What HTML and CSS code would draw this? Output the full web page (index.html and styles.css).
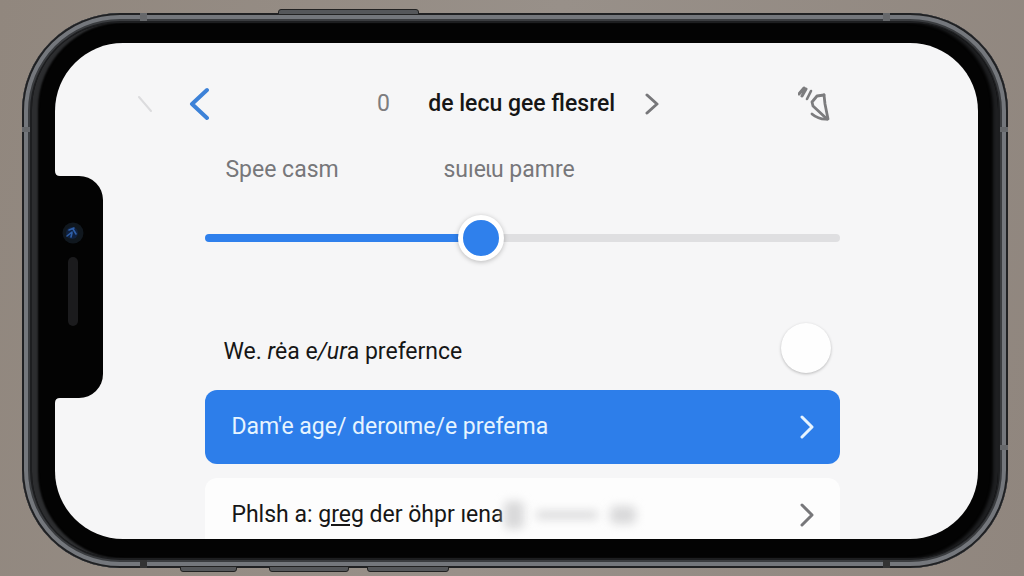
FILE: index.html
```
<!DOCTYPE html>
<html lang="en">
<head>
    <meta charset="UTF-8">
    <meta name="viewport" content="width=device-width, initial-scale=1.0">
    <title>Preferences</title>
    <link rel="stylesheet" href="styles.css">
</head>
<body>
    <div class="phone">
        <span class="key key-power"></span>
        <span class="key key-mute"></span>
        <span class="key key-up"></span>
        <span class="key key-down"></span>
        <span class="band band-tl"></span>
        <span class="band band-tr"></span>
        <span class="band band-bl"></span>
        <span class="band band-br"></span>
        <span class="band band-side band-lt"></span>
        <span class="band band-side band-rt"></span>
        <span class="band band-side band-rb"></span>

        <div class="bezel">
            <div class="notch">
                <svg class="camera" width="22" height="22" viewBox="0 0 22 22" aria-hidden="true">
                    <circle cx="11" cy="11" r="10.5" fill="#10171e"/>
                    <circle cx="10" cy="11" r="6" fill="#10213f"/>
                    <path d="M5 14l5-4M7 8l5-2M11 7l3 5M10 11l-1 4" fill="none" stroke="#2f5fa8" stroke-width="1.6"/>
                </svg>
                <span class="speaker"></span>
                <svg class="fillet fillet-top" width="5" height="5" viewBox="0 0 5 5" aria-hidden="true"><path d="M0 0Q0 5 5 5H0z"/></svg>
                <svg class="fillet fillet-bottom" width="5" height="5" viewBox="0 0 5 5" aria-hidden="true"><path d="M0 5Q0 0 5 0H0z"/></svg>
            </div>

            <main class="screen">
                <header class="topbar">
                    <svg class="tick" width="14" height="16" viewBox="0 0 14 16" aria-hidden="true"><path d="M1 1l12 14"/></svg>
                    <button class="icon-btn back" type="button" aria-label="Back">
                        <svg width="20" height="34" viewBox="0 0 20 34"><path d="M18 3L3 17l15 14"/></svg>
                    </button>
                    <span class="count">0</span>
                    <h1>de lecu gee flesrel</h1>
                    <button class="icon-btn next" type="button" aria-label="Next">
                        <svg width="14" height="22" viewBox="0 0 14 22"><path d="M2 2l10 9-10 9"/></svg>
                    </button>
                    <button class="icon-btn tool" type="button" aria-label="Options">
                        <svg width="34" height="38" viewBox="0 0 34 38">
                            <path d="M1 9l5-6M4 11l4-7" stroke-width="3"/>
                            <path d="M9 14l4-8" stroke-width="2.6"/>
                            <path d="M26 10l-7 1-5 6 1 4 14 13" stroke-width="2.8"/>
                            <path d="M26 10l1 9 3 15q-9 1-16-5" stroke-width="2.8"/>
                        </svg>
                    </button>
                </header>

                <div class="content">
                    <div class="slider-labels">
                        <label for="level">Spee casm</label>
                        <span>suıeɩu pamre</span>
                    </div>
                    <input class="slider" id="level" type="range" min="0" max="100" value="43">

                    <div class="pref">
                        <label for="pref">We. <i>r</i>ėa e<i>/ur</i>a prefernce</label>
                        <input class="toggle" id="pref" type="checkbox">
                    </div>

                    <button class="card card-active" type="button">
                        <span>Dam'e age/ deroɩme/e prefema</span>
                        <svg width="14" height="24" viewBox="0 0 14 24"><path d="M2 2l10 10L2 22"/></svg>
                    </button>
                    <button class="card" type="button">
                        <span>Phlsh a: <u>greg</u> der öhpr ıena</span>
                        <span class="smudge smudge-a"></span>
                        <span class="smudge smudge-b"></span>
                        <span class="smudge smudge-c"></span>
                        <svg width="14" height="24" viewBox="0 0 14 24"><path d="M2 2l10 10L2 22"/></svg>
                    </button>
                </div>
            </main>
        </div>
    </div>
</body>
</html>
```
FILE: styles.css
```
* {
    box-sizing: border-box;
}
body {
    margin: 0;
    height: 100vh;
    padding: 13px 16px 8px 22px;
    overflow: hidden;
    background: linear-gradient(100deg, #91877e, #989089 50%, #90867e);
    font-family: Roboto, "Liberation Sans", sans-serif;
    font-size: 23px;
    line-height: 28px;
    color: #161616;
}
svg {
    display: block;
    fill: none;
    stroke: currentColor;
    stroke-width: 3;
    stroke-linecap: round;
    stroke-linejoin: round;
}
button {
    font: inherit;
    color: inherit;
    border: 0;
    background: none;
    cursor: pointer;
}

/* phone body */
.phone {
    position: relative;
    height: 100%;
    padding: 2px;
    border-radius: 98px;
    background: #1d1e20;
    box-shadow: inset 0 0 0 2px #202123, inset 0 0 0 6px #74777c, inset 0 0 0 8px #3a3c3f;
}
.bezel {
    position: relative;
    height: 100%;
    padding: 20px 20px 19px 23px;
    border: 8px solid transparent;
    border-radius: 94px;
    background: #030303 padding-box;
    box-shadow: inset 7px 0 2px -1px #2c2d2f, inset -6px 0 3px -1px #1e1f21;
}
.key {
    position: absolute;
    height: 6px;
    background: #55575a;
    border: 1px solid #222;
}
.key-power {
    top: -4px;
    left: 26%;
    width: 141px;
    border-radius: 3px 3px 0 0;
}
.key-mute,
.key-up,
.key-down {
    bottom: -4px;
    border-radius: 0 0 3px 3px;
}
.key-mute {
    left: 16%;
    width: 57px;
}
.key-up {
    left: 25%;
    width: 80px;
}
.key-down {
    left: 35%;
    width: 82px;
}
.band {
    position: absolute;
    width: 7px;
    height: 8px;
    background: #66686b;
}
.band-tl { top: 0; left: 12%; }
.band-tr { top: 0; right: 12%; }
.band-bl { bottom: 0; left: 12%; background: #333; }
.band-br { bottom: 0; right: 12%; background: #333; }
.band-side {
    width: 8px;
    height: 5px;
}
.band-lt { left: 0; top: 114px; }
.band-rt { right: 0; top: 114px; }
.band-rb { right: 0; bottom: 118px; }

.notch {
    position: absolute;
    z-index: 1;
    top: 153px;
    left: 22px;
    width: 49px;
    height: 222px;
    border-radius: 0 24px 24px 0;
    background: #030303;
}
.camera {
    position: absolute;
    top: 46px;
    left: 8px;
    stroke: none;
}
.speaker {
    position: absolute;
    top: 81px;
    left: 14px;
    width: 10px;
    height: 69px;
    border-radius: 5px;
    background: #1b1b1d;
}
.fillet {
    position: absolute;
    left: 1px;
    fill: #030303;
    stroke: none;
}
.fillet-top {
    top: -5px;
}
.fillet-bottom {
    bottom: -5px;
}

/* screen */
.screen {
    height: 100%;
    padding: 36px 0 0;
    overflow: hidden;
    border-radius: 68px;
    background: #f6f6f7;
}
.topbar {
    display: grid;
    grid-template-columns: 10.5% 6.2% 19.6% 24.4% 19.8% 1fr;
    align-items: center;
    height: 50px;
}
.topbar h1 {
    justify-self: end;
    margin: 0;
    font-size: 23px;
    font-weight: 500;
    white-space: nowrap;
}
.tick {
    justify-self: end;
    color: #dcdcde;
    stroke-width: 2;
}
.icon-btn {
    justify-self: start;
    padding: 0;
}
.back {
    justify-self: end;
    color: #3d82d8;
}
.back svg {
    stroke-width: 4;
}
.count {
    justify-self: end;
    color: #7d7d7f;
}
.next {
    margin-left: 30px;
    color: #77777a;
}
.tool {
    color: #7c7c7e;
}

.content {
    margin: 0 15% 0 16.3%;
}
.slider-labels {
    display: grid;
    grid-template-columns: 218px 1fr;
    padding: 27px 20px 0;
    color: #77777a;
}
.slider {
    display: block;
    width: 100%;
    height: 46px;
    margin: 31px 0 0;
    appearance: none;
    background: none;
    cursor: pointer;
}
.slider::-webkit-slider-runnable-track {
    height: 8px;
    border-radius: 4px;
    background: linear-gradient(90deg, #2f80ec 43%, #dfdfe1 43%);
}
.slider::-webkit-slider-thumb {
    appearance: none;
    width: 46px;
    height: 46px;
    margin-top: -19px;
    border: 5px solid #fff;
    border-radius: 50%;
    background: #2f80ec;
    box-shadow: 0 1px 5px rgba(0, 0, 0, 0.25);
}
.pref {
    display: flex;
    align-items: center;
    justify-content: space-between;
    height: 86px;
    margin-top: 43px;
    padding: 10px 9px 0 18px;
}
.toggle {
    width: 50px;
    height: 50px;
    margin: 0 0 8px;
    appearance: none;
    border-radius: 50%;
    background: #fefefe;
    box-shadow: 0 1px 3px rgba(0, 0, 0, 0.25);
    cursor: pointer;
}
.card {
    display: flex;
    align-items: center;
    width: 100%;
    height: 74px;
    margin-bottom: 14px;
    padding: 0 26px;
    border-radius: 12px;
    background: #fdfdfd;
    text-align: left;
    white-space: nowrap;
}
.card svg {
    margin-left: auto;
    color: #77777a;
}
.card-active {
    background: #2d7eea;
    color: #e6f4ff;
}
.card-active svg {
    color: #e6f4ff;
}
.smudge {
    height: 18px;
    border-radius: 6px;
    background: #d9d9da;
    filter: blur(5px);
}
.smudge-a {
    width: 20px;
    height: 28px;
}
.smudge-b {
    width: 62px;
    height: 8px;
    margin: 0 12px;
}
.smudge-c {
    width: 26px;
}
```
